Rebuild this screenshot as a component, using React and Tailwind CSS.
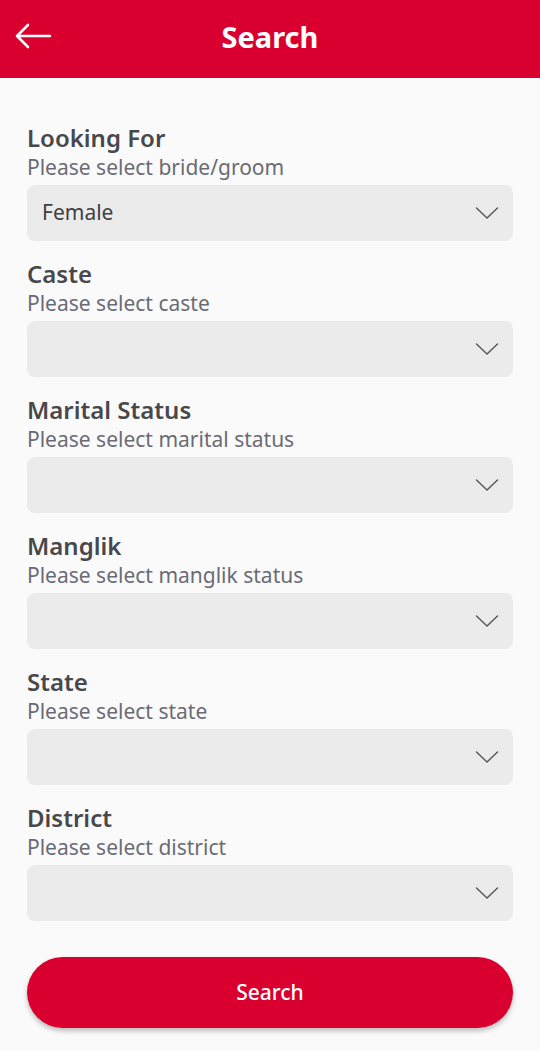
import { useState } from "react";

const fields = [
  { label: "Looking For", hint: "Please select bride/groom", value: "Female" },
  { label: "Caste", hint: "Please select caste", value: "" },
  { label: "Marital Status", hint: "Please select marital status", value: "" },
  { label: "Manglik", hint: "Please select manglik status", value: "" },
  { label: "State", hint: "Please select state", value: "" },
  { label: "District", hint: "Please select district", value: "" },
];

function Chevron() {
  return (
    <svg width="24" height="14" viewBox="0 0 24 14" fill="none">
      <path d="M1.5 2 L12 12 L22.5 2" stroke="#55555a" strokeWidth="1.4" strokeLinecap="round" strokeLinejoin="round" />
    </svg>
  );
}

export default function App() {
  const [values] = useState(fields.map((f) => f.value));

  return (
    <div className="min-h-[1051px] bg-[#fafafa] font-['Noto_Sans',sans-serif]">
      {/* Header */}
      <div className="h-[78px] bg-[#d9002f] flex items-center relative">
        <button className="absolute left-[14px] top-[22px]">
          <svg width="38" height="28" viewBox="0 0 38 28" fill="none">
            <path d="M36 14 H3 M14 3 L3 14 L14 25" stroke="white" strokeWidth="2.6" strokeLinecap="round" strokeLinejoin="round" />
          </svg>
        </button>
        <h1 className="w-full text-center text-white text-[29px] font-bold leading-none mb-[6px]">Search</h1>
      </div>

      {/* Form */}
      <div className="px-[27px] pt-[46px]">
        {fields.map((f, i) => (
          <div key={f.label} className="mb-[19px]">
            <div className="text-[24px] leading-[28px] font-semibold text-[#48484c]">{f.label}</div>
            <div className="mt-[2px] text-[21px] leading-[26px] text-[#6a6b74]">{f.hint}</div>
            <div className="mt-[5px] h-[56px] rounded-lg bg-[#ebebeb] flex items-center justify-between pl-[15px] pr-[14px]">
              <span className="text-[21px] text-[#404044]">{values[i]}</span>
              <Chevron />
            </div>
          </div>
        ))}

        <button className="mt-[17px] w-full h-[71px] rounded-full bg-[#d9002f] text-white text-[21px] font-medium shadow-[0_3px_5px_rgba(0,0,0,0.25)]">
          Search
        </button>
      </div>
    </div>
  );
}
